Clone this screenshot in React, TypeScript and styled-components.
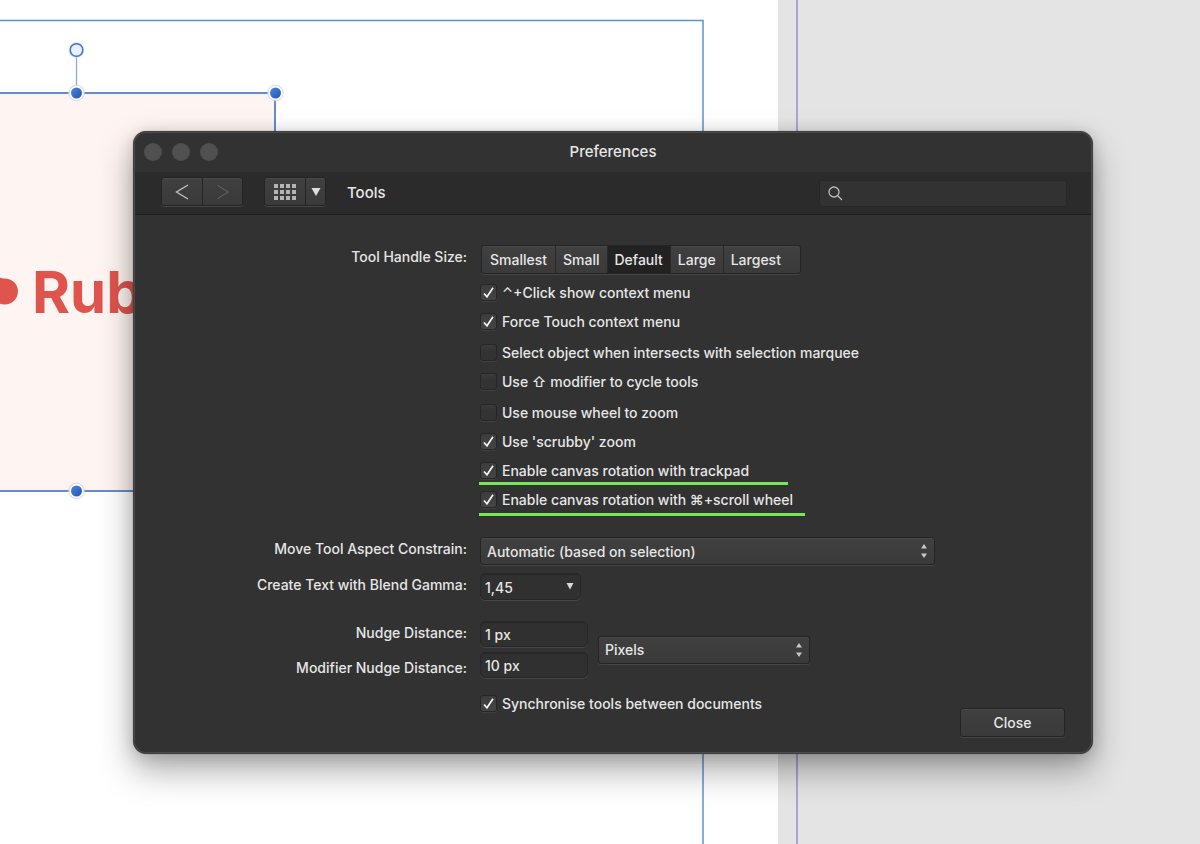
import React, { useState } from "react";
import styled, { createGlobalStyle, css } from "styled-components";

const GlobalStyle = createGlobalStyle`
  *, *::before, *::after { box-sizing: border-box; }
  body { margin: 0; background: #e4e4e4; }
  body, button, input, select {
    font-family: Inter, "Liberation Sans", "DejaVu Sans", sans-serif;
    font-size: 14px;
    font-weight: 500;
    color: #e6e6e6;
  }
`;

/* ---------- document canvas behind the window ---------- */

const Desktop = styled.main`
  position: relative;
  min-height: 100vh;
  padding: 131px 107px 90px 133px;
  overflow: hidden;
  background: #e4e4e4;
`;

const Page = styled.div`
  position: absolute;
  top: 0;
  bottom: 0;
  left: 0;
  width: 778px;
  background: #fff;
`;

const Artwork = styled.div`
  position: absolute;
  top: 93px;
  left: 0;
  width: 275px;
  height: 398px;
  background: #fef5f2;
`;

const LogoText = styled.div`
  position: absolute;
  top: 164px;
  left: 32px;
  font-size: 58px;
  line-height: 70px;
  font-weight: 700;
  color: #df544d;
`;

const Overlay = styled.svg`
  position: absolute;
  inset: 0;
  width: 100%;
  height: 100%;
`;

/* ---------- window ---------- */

const Window = styled.section`
  position: relative;
  border: 1px solid #3f3f3f;
  border-radius: 13px;
  background: #323232;
  box-shadow:
    inset 0 0 0 1px #4a4a4a,
    0 0 1px rgba(0, 0, 0, 0.5),
    0 16px 34px rgba(0, 0, 0, 0.34),
    0 2px 16px rgba(0, 0, 0, 0.14);
`;

const TitleBar = styled.header`
  display: grid;
  grid-template-columns: 1fr auto 1fr;
  align-items: center;
  height: 40px;
  padding: 0 10px;
`;

const Lights = styled.div`
  display: flex;
  gap: 10px;
`;

const Light = styled.button`
  width: 18px;
  height: 18px;
  padding: 0;
  border: 0;
  border-radius: 50%;
  background: #505050;
`;

const Title = styled.h1`
  margin: 0;
  font-size: 15px;
  line-height: 20px;
  font-weight: 500;
`;

const Toolbar = styled.nav`
  display: flex;
  align-items: center;
  height: 43px;
  margin: 0 1px;
  padding: 0 24px 0 26px;
  background: #2b2b2b;
  border-bottom: 1px solid #1e1e1e;
`;

const raised = css`
  border: 1px solid #242424;
  border-radius: 3px;
  background: linear-gradient(#404040, #3a3a3a);
  box-shadow: inset 0 1px 0 #494949, 0 1px 0 #454545;
`;

const sunken = css`
  border: 1px solid #272727;
  border-radius: 5px;
  background: #303030;
  box-shadow: inset 0 1px 1px #292929, 0 1px 0 #464646;
`;

const ButtonGroup = styled.div`
  ${raised}
  display: flex;
  height: 29px;
  margin: 0 21px 3px 0;
`;

const ToolButton = styled.button<{ $narrow?: boolean }>`
  display: flex;
  align-items: center;
  justify-content: center;
  width: ${(p) => (p.$narrow ? 20 : 40)}px;
  padding: 0;
  border: 0;
  background: none;
  & + & { border-left: 1px solid #242424; }
`;

const PaneName = styled.h2`
  margin: 0;
  font-size: 15px;
  line-height: 20px;
  font-weight: 500;
`;

const Search = styled.label`
  display: flex;
  align-items: center;
  gap: 6px;
  width: 248px;
  height: 27px;
  margin-left: auto;
  padding: 0 8px;
  border: 1px solid #272727;
  border-radius: 3px;
  background: #323232;
`;

const SearchInput = styled.input`
  flex: 1;
  min-width: 0;
  border: 0;
  outline: 0;
  background: none;
`;

/* ---------- form ---------- */

const Form = styled.form`
  padding: 30px 27px 16px 0;
`;

const Row = styled.div<{ $gap: number }>`
  display: grid;
  grid-template-columns: 333px minmax(0, 1fr);
  column-gap: 13px;
  align-items: start;
  margin-bottom: ${(p) => p.$gap}px;
`;

const Caption = styled.label`
  padding-top: 2px;
  line-height: 20px;
  text-align: right;
`;

const CaptionStack = styled.div`
  display: flex;
  flex-direction: column;
  justify-content: space-between;
  align-self: stretch;
`;

const Segments = styled.div`
  ${raised}
  display: inline-flex;
  height: 29px;
  margin-left: 1px;
`;

const Segment = styled.button<{ $active: boolean }>`
  padding: 0 7px;
  border: 0;
  background: ${(p) => (p.$active ? "#222" : "none")};
  & + & { border-left: 1px solid #282828; }
  &:first-child { padding: 0 8px; }
  &:last-child { padding-right: 19px; }
`;

const CheckGroup = styled.div`
  & + & { margin-top: 2px; }
`;

const Check = styled.label`
  position: relative;
  display: flex;
  align-items: center;
  gap: 5px;
  height: 29px;
  width: max-content;
`;

const Box = styled.input`
  appearance: none;
  width: 17px;
  height: 17px;
  margin: 0;
  border: 1px solid #262626;
  border-radius: 3px;
  background: linear-gradient(#3c3c3c, #333 40%);
  box-shadow: 0 1px 0 #404040;
  &:checked { background: linear-gradient(#3c3c3c, #454545); }
`;

const Tick = styled.svg`
  position: absolute;
  left: 3px;
  top: 9px;
  pointer-events: none;
  input:not(:checked) + & { display: none; }
`;

const Marker = styled.span<{ $width: number; $drop: number }>`
  position: absolute;
  left: -1px;
  bottom: ${(p) => -p.$drop}px;
  width: ${(p) => p.$width}px;
  height: 3px;
  background: #78e85a;
`;

const SelectWrap = styled.div<{ $width: number }>`
  position: relative;
  width: ${(p) => p.$width}px;
  max-width: 100%;
`;

const Select = styled.select<{ $sunken?: boolean }>`
  appearance: none;
  display: block;
  width: 100%;
  height: ${(p) => (p.$sunken ? 27 : 28)}px;
  padding: 0 6px;
  ${(p) => (p.$sunken ? sunken : raised)}
  ${(p) => p.$sunken && css`padding: 1px 4px 0;`}
`;

const Arrows = styled.svg`
  position: absolute;
  right: 7px;
  top: 6px;
  pointer-events: none;
`;

const NudgeFields = styled.div`
  display: flex;
  align-items: center;
  gap: 10px;
`;

const InputStack = styled.div`
  display: flex;
  flex-direction: column;
  gap: 5px;
`;

const TextInput = styled.input`
  ${sunken}
  display: block;
  width: 108px;
  height: 26px;
  padding: 0 4px;
`;

const Footer = styled.div`
  display: flex;
  justify-content: space-between;
  align-items: flex-start;
`;

const CloseButton = styled.button`
  ${raised}
  width: 105px;
  height: 29px;
  margin-top: 19px;
`;

const sizes = ["Smallest", "Small", "Default", "Large", "Largest"];

type Option = { text: string; on?: boolean; mark?: [number, number] };

const optionGroups: Option[][] = [
  [
    { text: "⌃+Click show context menu", on: true },
    { text: "Force Touch context menu", on: true },
  ],
  [
    { text: "Select object when intersects with selection marquee" },
    { text: "Use ⇧ modifier to cycle tools" },
  ],
  [
    { text: "Use mouse wheel to zoom" },
    { text: "Use 'scrubby' zoom", on: true },
    { text: "Enable canvas rotation with trackpad", on: true, mark: [309, 0] },
    { text: "Enable canvas rotation with ⌘+scroll wheel", on: true, mark: [326, 2] },
  ],
];

function CheckOption({ text, on, mark }: Option) {
  return (
    <Check>
      <Box type="checkbox" defaultChecked={on} />
      <Tick width="11" height="11" viewBox="0 0 11 11" fill="none" stroke="#f4f4f4" strokeWidth="1.7">
        <path d="M1 6.500 4 9.800 10 0.800" />
      </Tick>
      <span>{text}</span>
      {mark && <Marker $width={mark[0]} $drop={mark[1]} />}
    </Check>
  );
}

function UpDown() {
  return (
    <Arrows width="8" height="16" viewBox="0 0 8 16" fill="#c8c8c8">
      <path d="M4 1 7 5.500H1ZM4 15 1 10.500H7Z" />
    </Arrows>
  );
}

function Knob({ x, y }: { x: number; y: number }) {
  return (
    <g>
      <circle cx={x} cy={y} r="8.300" fill="#cfd3d8" opacity="0.8" />
      <circle cx={x} cy={y} r="7.200" fill="#fff" />
      <circle cx={x} cy={y} r="5.500" fill="url(#knob)" />
    </g>
  );
}

function Canvas() {
  return (
    <>
      <Page>
        <Artwork>
          <LogoText>Rub</LogoText>
        </Artwork>
      </Page>
      <Overlay aria-hidden="true" fill="none">
        <defs>
          <linearGradient id="knob" x1="0" y1="0" x2="1" y2="1">
            <stop offset="0" stopColor="#4a86dc" />
            <stop offset="1" stopColor="#2455b0" />
          </linearGradient>
        </defs>
        <path d="M-12 284C-10 276 -2 277 3 278.500C12 278 18 284 18 291C18 299 12 304.500 5 304.500C-2 304.500 -4 301 -12 298Z" fill="#df544d" />
        <rect x="-10" y="20.500" width="713" height="2000" stroke="#5c92d6" strokeWidth="1.500" />
        <path d="M797 0V3000" stroke="#a398d2" strokeWidth="1.700" />
        <rect x="-10" y="93" width="285" height="398" stroke="#3f70c8" strokeWidth="1.600" />
        <path d="M76.500 56V88" stroke="#85aae6" strokeWidth="1.300" />
        <circle cx="76.500" cy="50" r="7.800" fill="#d3e3fa" />
        <circle cx="76.500" cy="50" r="6.300" fill="#e8f1fd" stroke="#4373d0" strokeWidth="1.500" />
        <Knob x={76.5} y={93} />
        <Knob x={275.5} y={93} />
        <Knob x={76.5} y={491} />
      </Overlay>
    </>
  );
}

export default function App() {
  const [size, setSize] = useState("Default");

  return (
    <Desktop>
      <GlobalStyle />
      <Canvas />
      <Window aria-labelledby="title">
        <TitleBar>
          <Lights>
            <Light aria-label="Close window" />
            <Light aria-label="Minimise" />
            <Light aria-label="Zoom" />
          </Lights>
          <Title id="title">Preferences</Title>
        </TitleBar>

        <Toolbar>
          <ButtonGroup>
            <ToolButton aria-label="Back">
              <svg width="14" height="16" viewBox="0 0 14 16" fill="none" stroke="#c4c4c4" strokeWidth="1.3">
                <path d="M13 1 1.500 8 13 15" />
              </svg>
            </ToolButton>
            <ToolButton aria-label="Forward">
              <svg width="14" height="16" viewBox="0 0 14 16" fill="none" stroke="#646464" strokeWidth="1">
                <path d="M1.500 1.500 12.500 8 1.500 14.500" />
              </svg>
            </ToolButton>
          </ButtonGroup>
          <ButtonGroup>
            <ToolButton aria-label="Show all">
              <svg width="24" height="18" viewBox="0 0 24 18" fill="#b4b4b4">
                {[1, 7, 13, 19].map((x) =>
                  [1, 7, 13].map((y) => <rect key={`${x}-${y}`} x={x} y={y} width="4" height="4" />)
                )}
              </svg>
            </ToolButton>
            <ToolButton $narrow aria-label="Choose pane">
              <svg width="10" height="8" viewBox="0 0 10 8" fill="#dedede">
                <path d="M0.500 0H9.500L5 8Z" />
              </svg>
            </ToolButton>
          </ButtonGroup>
          <PaneName>Tools</PaneName>
          <Search>
            <svg width="15" height="15" viewBox="0 0 15 15" fill="none" stroke="#bcbcbc" strokeWidth="1.3">
              <circle cx="6" cy="6" r="5" />
              <path d="M9.500 9.500 14 14" />
            </svg>
            <SearchInput type="text" aria-label="Search preferences" />
          </Search>
        </Toolbar>

        <Form onSubmit={(e) => e.preventDefault()}>
          <Row $gap={4}>
            <Caption as="span" id="handle-size">Tool Handle Size:</Caption>
            <div>
              <Segments role="group" aria-labelledby="handle-size">
                {sizes.map((s) => (
                  <Segment key={s} type="button" $active={s === size} aria-pressed={s === size} onClick={() => setSize(s)}>
                    {s}
                  </Segment>
                ))}
              </Segments>
            </div>
          </Row>

          <Row $gap={23}>
            <span />
            <div>
              {optionGroups.map((group, i) => (
                <CheckGroup key={i}>
                  {group.map((o) => (
                    <CheckOption key={o.text} {...o} />
                  ))}
                </CheckGroup>
              ))}
            </div>
          </Row>

          <Row $gap={8}>
            <Caption htmlFor="aspect">Move Tool Aspect Constrain:</Caption>
            <SelectWrap $width={455}>
              <Select id="aspect">
                <option>Automatic (based on selection)</option>
              </Select>
              <UpDown />
            </SelectWrap>
          </Row>

          <Row $gap={21}>
            <Caption htmlFor="gamma">Create Text with Blend Gamma:</Caption>
            <SelectWrap $width={101}>
              <Select id="gamma" $sunken>
                <option>1,45</option>
              </Select>
              <Arrows width="8" height="16" viewBox="0 0 8 16" fill="#d8d8d8">
                <path d="M0.500 4H7.500L4 10.500Z" />
              </Arrows>
            </SelectWrap>
          </Row>

          <Row $gap={11}>
            <CaptionStack>
              <Caption htmlFor="nudge">Nudge Distance:</Caption>
              <Caption htmlFor="modifier-nudge">Modifier Nudge Distance:</Caption>
            </CaptionStack>
            <NudgeFields>
              <InputStack>
                <TextInput id="nudge" defaultValue="1 px" />
                <TextInput id="modifier-nudge" defaultValue="10 px" />
              </InputStack>
              <SelectWrap $width={212}>
                <Select aria-label="Nudge unit">
                  <option>Pixels</option>
                </Select>
                <UpDown />
              </SelectWrap>
            </NudgeFields>
          </Row>

          <Row $gap={0}>
            <span />
            <Footer>
              <CheckOption text="Synchronise tools between documents" on />
              <CloseButton type="button">Close</CloseButton>
            </Footer>
          </Row>
        </Form>
      </Window>
    </Desktop>
  );
}
